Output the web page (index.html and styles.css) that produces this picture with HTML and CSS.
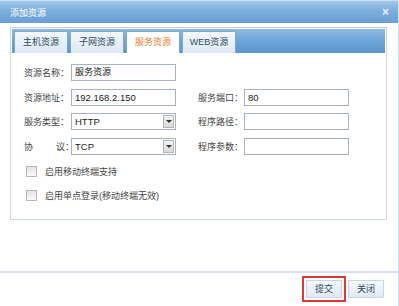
FILE: index.html
```html
<!DOCTYPE html>
<html lang="zh-CN">
<head>
    <meta charset="UTF-8">
    <title>添加资源</title>
    <link rel="stylesheet" href="styles.css">
</head>
<body>
    <div class="dialog">
        <div class="titlebar">
            <span class="title">添加资源</span>
            <span class="close">×</span>
        </div>
        <div class="content">
            <div class="panel">
                <div class="tabs">
                    <div class="tab">主机资源</div>
                    <div class="tab">子网资源</div>
                    <div class="tab active">服务资源</div>
                    <div class="tab">WEB资源</div>
                </div>
                <div class="form">
                    <div class="row">
                        <label>资源名称：</label>
                        <div class="input">服务资源</div>
                    </div>
                    <div class="row">
                        <label>资源地址：</label>
                        <div class="input latin">192.168.2.150</div>
                        <label class="right">服务端口：</label>
                        <div class="input latin">80</div>
                    </div>
                    <div class="row">
                        <label>服务类型：</label>
                        <div class="input latin">HTTP<span class="arrow"></span></div>
                        <label class="right">程序路径：</label>
                        <div class="input"></div>
                    </div>
                    <div class="row">
                        <label class="spread">协<span>议：</span></label>
                        <div class="input latin">TCP<span class="arrow"></span></div>
                        <label class="right">程序参数：</label>
                        <div class="input"></div>
                    </div>
                    <div class="check first"><span class="box"></span>启用移动终端支持</div>
                    <div class="check"><span class="box"></span>启用单点登录(移动终端无效)</div>
                </div>
            </div>
        </div>
        <div class="footer">
            <span class="btn focus">提交</span>
            <span class="btn">关闭</span>
        </div>
    </div>
</body>
</html>
```

FILE: styles.css
```css
body {
    margin: 0;
    font-family: "Liberation Sans", "Noto Sans CJK SC", sans-serif;
    font-size: 9px;
    color: #444;
    background: #fff;
}
.dialog {
    width: 399px;
    height: 306px;
    box-sizing: border-box;
    border-right: 1px solid #d3e2f1;
    display: flex;
    flex-direction: column;
}
.titlebar {
    height: 22px;
    display: flex;
    align-items: center;
    justify-content: space-between;
    padding: 0 9px 0 10px;
    background: linear-gradient(#a4c8ea, #7eb0de 40%, #6b9fd3);
    border-top: 1px solid #c8def3;
    color: #fff;
}
.close {
    font-size: 12px;
    font-weight: bold;
    color: #e8f1fa;
}
.content {
    padding: 4px 11px 0 10px;
}
.panel {
    height: 191px;
    border: 1px solid #c9d9ea;
    border-top-color: #b6cde4;
}
.tabs {
    display: flex;
    gap: 2px;
    height: 21px;
    padding: 2px 1px 1px 2px;
    margin: 1px 1px 0 1px;
    background: linear-gradient(#8dbbe6, #6ea4d8 50%, #5c95cc);
}
.tab {
    width: 52px;
    height: 21px;
    line-height: 21px;
    text-align: center;
    border: 1px solid #7fa8d2;
    border-bottom: none;
    background: linear-gradient(#f4f8fc, #dde9f5);
    color: #2c4a66;
}
.tab.active {
    background: #fff;
    color: #f07d2c;
}
.form {
    padding: 11px 0 0 13px;
}
.row {
    display: flex;
    align-items: center;
    height: 17px;
    margin-bottom: 7.5px;
}
label {
    width: 47px;
    white-space: nowrap;
}
label.right {
    width: 46px;
    margin-left: 22px;
}
label.spread span {
    margin-left: 23px;
}
.input {
    width: 100px;
    height: 15px;
    line-height: 15px;
    border: 1px solid #a9b3bf;
    padding-left: 3px;
    color: #222;
    position: relative;
}
.latin {
    font-size: 9.5px;
}
.arrow {
    position: absolute;
    right: 1px;
    top: 1px;
    width: 11px;
    height: 13px;
    background: linear-gradient(#f2f2f2, #d9d9d9);
    border: 1px solid #b5b5b5;
    box-sizing: border-box;
}
.arrow::after {
    content: "";
    position: absolute;
    left: 2px;
    top: 4px;
    border-left: 3px solid transparent;
    border-right: 3px solid transparent;
    border-top: 3px solid #333;
}
.check {
    display: flex;
    align-items: center;
    height: 14px;
    margin-bottom: 10px;
    padding-left: 2px;
}
.check.first {
    margin-top: 10px;
}
.box {
    width: 9px;
    height: 9px;
    border: 1px solid #b8b8b8;
    background: linear-gradient(#e6e6e6, #f8f8f8);
    margin-right: 8px;
}
.footer {
    margin-top: auto;
    height: 32px;
    border-top: 2px solid #d8e3ee;
    display: flex;
    justify-content: flex-end;
    align-items: center;
    gap: 6px;
    padding-right: 14px;
    margin-bottom: 1px;
}
.btn {
    width: 34px;
    height: 16px;
    line-height: 16px;
    text-align: center;
    border: 1px solid #c5d6e8;
    background: linear-gradient(#f6f9fc, #dfeaf5);
    color: #2c4a66;
}
.btn.focus {
    outline: 2px solid #e03838;
    outline-offset: 2px;
}
```
